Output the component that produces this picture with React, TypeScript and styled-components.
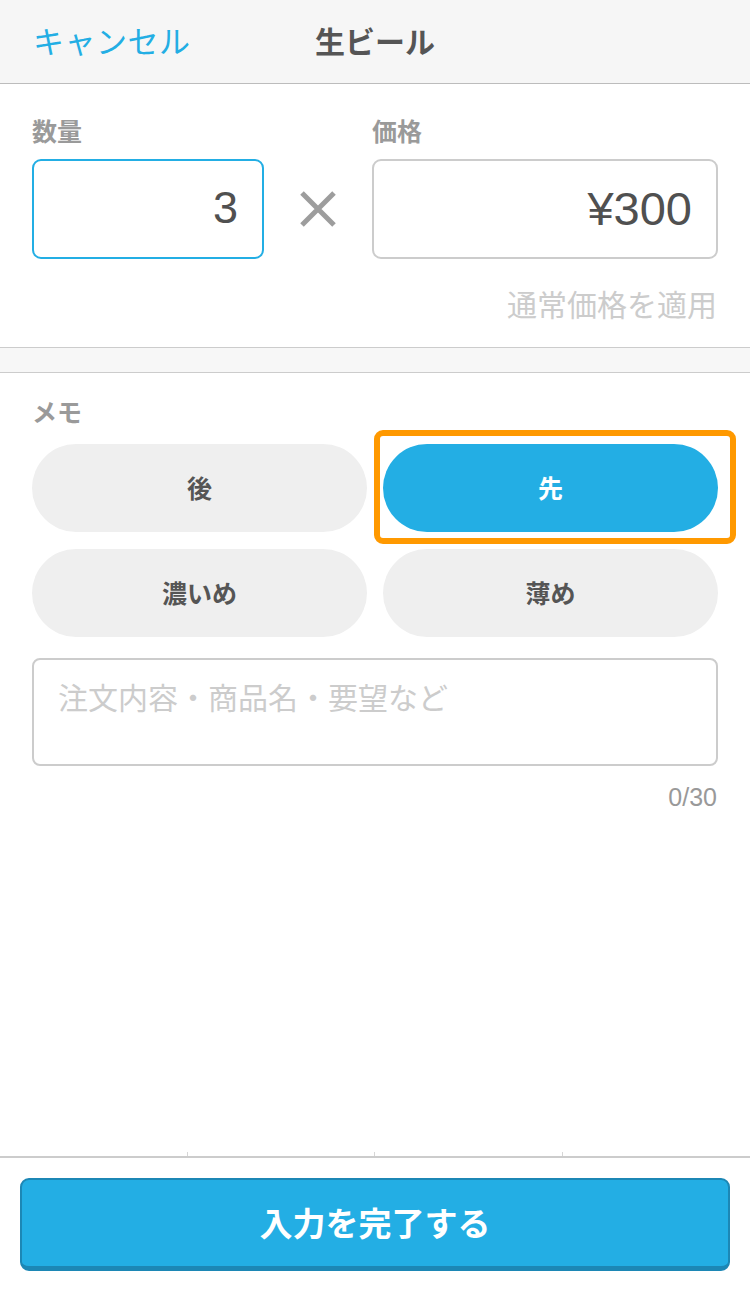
import React from 'react';
import styled, { createGlobalStyle } from 'styled-components';

const GlobalStyle = createGlobalStyle`
  html, body {
    margin: 0;
    padding: 0;
    background: #ffffff;
  }
  body {
    font-family: "Noto Sans CJK JP", "Noto Sans", sans-serif;
    color: #555555;
  }
  * {
    box-sizing: border-box;
  }
`;

const Page = styled.div`
  min-height: 1290px;
  display: flex;
  flex-direction: column;
`;

const Header = styled.header`
  height: 84px;
  background: #f6f6f6;
  border-bottom: 1px solid #bcbcbc;
  display: grid;
  grid-template-columns: 1fr auto 1fr;
  align-items: center;
  padding: 0 33px 4px;
`;

const Cancel = styled.span`
  color: #23aee4;
  font-size: 31px;
  letter-spacing: 0.5px;
`;

const Title = styled.h1`
  margin: 0;
  font-size: 30px;
  font-weight: 700;
  color: #555555;
`;

const PriceSection = styled.section`
  padding: 29px 32px 24px;
`;

const PriceGrid = styled.div`
  display: grid;
  grid-template-columns: 232px 108px 1fr;
  grid-template-rows: 34px 100px;
  row-gap: 12px;
`;

const Label = styled.div<{ $col?: number }>`
  grid-column: ${(p) => p.$col ?? 1};
  font-size: 25px;
  line-height: 34px;
  font-weight: 700;
  color: #9a9a9a;
`;

const NumberBox = styled.div<{ $active?: boolean; $col: number }>`
  grid-column: ${(p) => p.$col};
  grid-row: 2;
  border: 2px solid ${(p) => (p.$active ? '#23aee4' : '#cccccc')};
  border-radius: 9px;
  display: flex;
  align-items: center;
  justify-content: flex-end;
  padding: 0 24px 2px;
  font-family: "Liberation Sans", "Noto Sans", sans-serif;
  font-size: ${(p) => (p.$active ? 45 : 47)}px;
  color: #505050;
`;

const Times = styled.div`
  grid-column: 2;
  grid-row: 2;
  display: flex;
  align-items: center;
  justify-content: center;
`;

const ApplyRow = styled.div`
  margin-top: 24px;
  text-align: right;
  font-size: 30px;
  line-height: 40px;
  color: #cccccc;
  padding-right: 1px;
`;

const Divider = styled.div`
  height: 26px;
  background: #f7f7f7;
  border-top: 1px solid #cccccc;
  border-bottom: 1px solid #cccccc;
`;

const MemoSection = styled.section`
  padding: 21px 32px 0;
`;

const OptionGrid = styled.div`
  margin-top: 16px;
  display: grid;
  grid-template-columns: 1fr 1fr;
  column-gap: 16px;
  row-gap: 17px;
`;

const OptionWrap = styled.div`
  position: relative;
`;

const Option = styled.button<{ $selected?: boolean }>`
  width: 100%;
  height: 88px;
  border: none;
  border-radius: 44px;
  background: ${(p) => (p.$selected ? '#23aee4' : '#efefef')};
  color: ${(p) => (p.$selected ? '#ffffff' : '#555555')};
  font-family: "Noto Sans CJK JP", sans-serif;
  font-size: 25px;
  font-weight: 700;
  padding: 0 0 2px;
`;

const Highlight = styled.div`
  position: absolute;
  left: -9px;
  top: -14px;
  right: -18px;
  bottom: -12px;
  border: 6px solid #ff9900;
  border-radius: 9px;
  pointer-events: none;
`;

const MemoBox = styled.div`
  margin-top: 21px;
  height: 108px;
  border: 2px solid #cccccc;
  border-radius: 8px;
  padding: 16px 24px;
  font-size: 30px;
  line-height: 40px;
  color: #cccccc;
`;

const Counter = styled.div`
  margin-top: 14px;
  text-align: right;
  font-family: "Liberation Sans", "Noto Sans", sans-serif;
  font-size: 25px;
  line-height: 34px;
  color: #999999;
  padding-right: 1px;
`;

const Spacer = styled.div`
  flex: 1;
`;

const Ticks = styled.div`
  display: grid;
  grid-template-columns: repeat(4, 1fr);
  height: 4px;
`;

const Tick = styled.div<{ $last?: boolean }>`
  border-right: ${(p) => (p.$last ? 'none' : '1px solid #d6d6d6')};
`;

const Footer = styled.footer`
  border-top: 2px solid #cccccc;
  padding: 20px 20px 19px;
`;

const SubmitButton = styled.button`
  width: 100%;
  height: 93px;
  border: 2px solid #1c87b5;
  border-bottom-width: 5px;
  border-radius: 9px;
  background: #23aee4;
  color: #ffffff;
  font-family: "Noto Sans CJK JP", sans-serif;
  font-size: 33px;
  font-weight: 700;
  padding: 0 0 2px;
`;

const options = [
  { label: '後', selected: false },
  { label: '先', selected: true },
  { label: '濃いめ', selected: false },
  { label: '薄め', selected: false },
];

export default function App() {
  return (
    <Page>
      <GlobalStyle />
      <Header>
        <Cancel>キャンセル</Cancel>
        <Title>生ビール</Title>
        <span />
      </Header>

      <PriceSection>
        <PriceGrid>
          <Label $col={1}>数量</Label>
          <Label $col={3}>価格</Label>
          <NumberBox $col={1} $active>3</NumberBox>
          <Times>
            <svg width="38" height="38" viewBox="0 0 38 38">
              <path d="M3 3 L35 35 M35 3 L3 35" stroke="#9d9d9d" strokeWidth="5" strokeLinecap="butt" />
            </svg>
          </Times>
          <NumberBox $col={3}>¥300</NumberBox>
        </PriceGrid>
        <ApplyRow>通常価格を適用</ApplyRow>
      </PriceSection>

      <Divider />

      <MemoSection>
        <Label>メモ</Label>
        <OptionGrid>
          {options.map((o) => (
            <OptionWrap key={o.label}>
              <Option $selected={o.selected}>{o.label}</Option>
              {o.selected && <Highlight />}
            </OptionWrap>
          ))}
        </OptionGrid>
        <MemoBox>注文内容・商品名・要望など</MemoBox>
        <Counter>0/30</Counter>
      </MemoSection>

      <Spacer />

      <Ticks>
        <Tick />
        <Tick />
        <Tick />
        <Tick $last />
      </Ticks>
      <Footer>
        <SubmitButton>入力を完了する</SubmitButton>
      </Footer>
    </Page>
  );
}
